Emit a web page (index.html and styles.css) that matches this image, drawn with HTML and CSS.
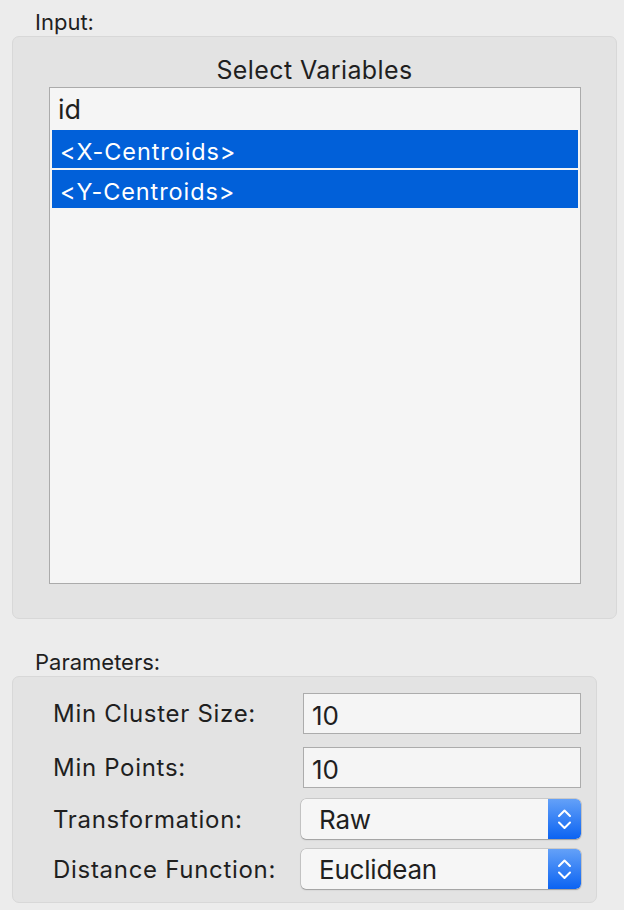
FILE: index.html
```html
<!DOCTYPE html>
<html>
<head>
<meta charset="utf-8">
<link rel="stylesheet" href="styles.css">
</head>
<body>
<div class="page">
  <div class="section-title input-title">Input:</div>
  <div class="group input-group">
    <div class="list-title">Select Variables</div>
    <div class="listbox">
      <div class="row row-big">id</div>
      <div class="row sel">&lt;X-Centroids&gt;</div>
      <div class="row sel">&lt;Y-Centroids&gt;</div>
    </div>
  </div>
  <div class="section-title params-title">Parameters:</div>
  <div class="group params-group">
    <div class="param-row row-a">
      <div class="label">Min Cluster Size:</div>
      <div class="field">10</div>
    </div>
    <div class="param-row row-b">
      <div class="label">Min Points:</div>
      <div class="field">10</div>
    </div>
    <div class="param-row row-c">
      <div class="label">Transformation:</div>
      <div class="popup"><span class="popup-text">Raw</span><span class="stepper"><svg width="33" height="40" viewBox="0 0 33 40"><path d="M11 17 L16.5 11.5 L22 17" /><path d="M11 23.5 L16.5 29 L22 23.5" /></svg></span></div>
    </div>
    <div class="param-row row-d">
      <div class="label">Distance Function:</div>
      <div class="popup"><span class="popup-text">Euclidean</span><span class="stepper"><svg width="33" height="40" viewBox="0 0 33 40"><path d="M11 17 L16.5 11.5 L22 17" /><path d="M11 23.5 L16.5 29 L22 23.5" /></svg></span></div>
    </div>
  </div>
</div>
</body>
</html>
```
FILE: styles.css
```css
html, body {
  margin: 0;
  padding: 0;
  background: #ececec;
}
body {
  width: 624px;
  height: 910px;
  overflow: hidden;
  font-family: Inter, "Liberation Sans", sans-serif;
  color: #1f1f1f;
}
.page {
  padding: 9px 0 0 12px;
}
.section-title {
  font-size: 22px;
  line-height: 27px;
  padding-left: 23px;
}
.group {
  box-sizing: border-box;
  background: #e3e3e3;
  border: 1px solid #d8d8d8;
  border-radius: 7px;
}
.input-group {
  width: 605px;
  height: 583px;
  padding-top: 18px;
}
.list-title {
  text-align: center;
  font-size: 25px;
  line-height: 30px;
  letter-spacing: 0.4px;
  margin-bottom: 2px;
}
.listbox {
  box-sizing: border-box;
  margin-left: 36px;
  width: 532px;
  height: 497px;
  border: 1px solid #ababab;
  background: #f5f5f5;
  padding: 2px;
  display: flex;
  flex-direction: column;
  gap: 2px;
}
.row {
  box-sizing: border-box;
  height: 38px;
  padding: 6px 0 0 8px;
  font-size: 23.5px;
  line-height: 32px;
  letter-spacing: 0.9px;
  white-space: nowrap;
}
.row-big {
  font-size: 27px;
  padding-top: 4px;
  letter-spacing: 0;
  padding-left: 6px;
}
.sel {
  background: #0160d9;
  color: #ffffff;
}
.params-title {
  margin-top: 30px;
}
.params-group {
  width: 585px;
  height: 227px;
  padding: 16px 0 0 40px;
}
.param-row {
  display: flex;
  align-items: center;
  justify-content: space-between;
  width: 528px;
}
.row-a, .row-b { height: 41px; }
.row-c, .row-d { height: 40px; }
.row-b { margin-top: 13px; }
.row-c { margin-top: 11px; }
.row-d { margin-top: 10px; }
.label {
  font-size: 24px;
  letter-spacing: 0.7px;
  white-space: nowrap;
}
.field {
  box-sizing: border-box;
  width: 278px;
  height: 41px;
  border: 1px solid #acacac;
  background: #f5f5f5;
  font-size: 26px;
  padding: 3px 0 0 8px;
  display: flex;
  align-items: center;
}
.popup {
  box-sizing: border-box;
  width: 280px;
  height: 40px;
  border-radius: 5px;
  background: #f6f6f6;
  box-shadow: 0 0 0 0.5px rgba(0,0,0,0.22), 0 1px 1.5px rgba(0,0,0,0.22);
  display: flex;
  align-items: center;
  justify-content: space-between;
  overflow: hidden;
}
.popup-text {
  font-size: 26px;
  padding-left: 18px;
  letter-spacing: -0.2px;
}
.stepper {
  width: 33px;
  height: 40px;
  background: linear-gradient(#64a1f8, #0b63f2);
  border-radius: 0 5px 5px 0;
  display: block;
}
.stepper svg {
  display: block;
  fill: none;
  stroke: #ffffff;
  stroke-width: 2;
  stroke-linecap: round;
  stroke-linejoin: round;
}
```
